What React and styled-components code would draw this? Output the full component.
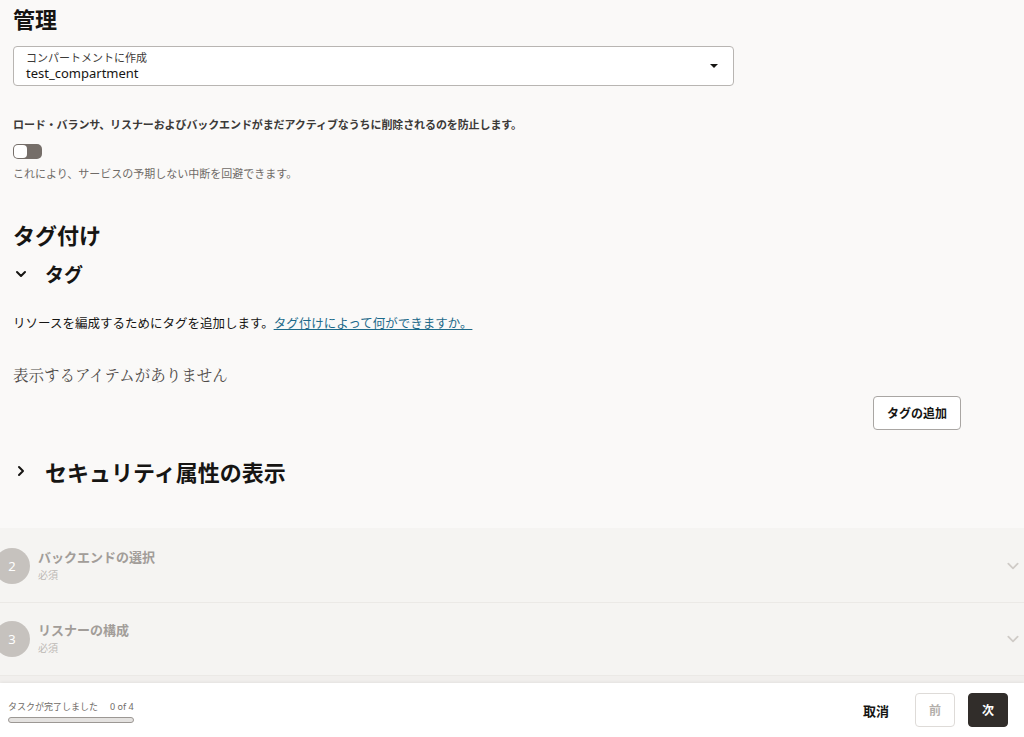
import React from "react";
import styled, { createGlobalStyle } from "styled-components";

const GlobalStyle = createGlobalStyle`
  html, body {
    margin: 0;
    padding: 0;
    background: #faf9f8;
  }
  body {
    font-family: "Noto Sans", "Noto Sans CJK JP", sans-serif;
    color: #161513;
  }
`;

const Page = styled.div`
  width: 1024px;
  height: 737px;
  display: flex;
  flex-direction: column;
  overflow: hidden;
  background: #faf9f8;
`;

const Content = styled.div`
  flex: 1;
  padding: 4px 13px 0 13px;
  display: flex;
  flex-direction: column;
`;

const Heading = styled.h2`
  margin: ${({ $top }) => $top || 0}px 0 0;
  font-size: 22px;
  line-height: 30px;
  font-weight: 700;
  color: #161513;
`;

const SelectBox = styled.div`
  margin-top: 12px;
  width: 721px;
  height: 40px;
  box-sizing: border-box;
  background: #fff;
  border: 1px solid #b8b5b2;
  border-radius: 4px;
  display: flex;
  align-items: center;
  justify-content: space-between;
  padding: 0 15px 0 12px;
`;

const SelectText = styled.div`
  display: flex;
  flex-direction: column;
`;

const SelectLabel = styled.span`
  font-size: 11px;
  line-height: 14px;
  color: #3c3a38;
`;

const SelectValue = styled.span`
  font-size: 13px;
  line-height: 16px;
  color: #161513;
`;

const Caret = styled.span`
  width: 0;
  height: 0;
  border-left: 4px solid transparent;
  border-right: 4px solid transparent;
  border-top: 4px solid #161513;
`;

const Notice = styled.div`
  margin-top: 31px;
  font-size: 11px;
  line-height: 16px;
  font-weight: 700;
  color: #3c3a38;
  letter-spacing: -0.1px;
`;

const Toggle = styled.div`
  margin-top: 11px;
  width: 29px;
  height: 15px;
  box-sizing: border-box;
  border-radius: 5px;
  background: #756e69;
  padding: 1px;
  display: flex;
`;

const Knob = styled.span`
  width: 13px;
  height: 13px;
  box-sizing: border-box;
  border-radius: 4px;
  background: #fff;
`;

const Helper = styled.div`
  margin-top: 7px;
  font-size: 11px;
  line-height: 16px;
  color: #6f6b67;
`;

const CollapseRow = styled.div`
  margin-top: ${({ $top }) => $top}px;
  display: flex;
  align-items: center;
  height: ${({ $h }) => $h}px;
`;

const ChevronBox = styled.span`
  width: 30px;
  display: flex;
  align-items: center;
  padding-left: 2px;
`;

const CollapseTitle = styled.span`
  font-size: ${({ $size }) => $size}px;
  font-weight: 700;
  color: #161513;
`;

const Description = styled.div`
  margin-top: 27px;
  font-size: 12.5px;
  line-height: 18px;
  color: #161513;
`;

const Link = styled.a`
  color: #1d6a8a;
  text-decoration: underline;
  padding-right: 4px;
`;

const Empty = styled.div`
  margin-top: 29px;
  font-family: "Noto Serif CJK JP", "Liberation Serif", serif;
  font-size: 15.5px;
  line-height: 24px;
  color: #4f4b48;
`;

const ButtonRow = styled.div`
  margin-top: 10px;
  display: flex;
  justify-content: flex-end;
  padding-right: 50px;
`;

const OutlineButton = styled.button`
  height: 34px;
  padding: 0 13px;
  background: #fff;
  border: 1px solid #a9a6a3;
  border-radius: 4px;
  font-family: inherit;
  font-size: 12px;
  font-weight: 700;
  color: #161513;
`;

const Steps = styled.div`
  background: #f5f4f2;
  padding-top: 2px;
  border-bottom: 7px solid #f1efed;
`;

const StepRow = styled.div`
  height: 72px;
  display: flex;
  align-items: center;
  border-bottom: 1px solid #ebe9e6;
  padding-right: 4px;
`;

const StepCircle = styled.span`
  width: 36px;
  height: 36px;
  margin-left: -6px;
  border-radius: 50%;
  background: #c6c2be;
  color: #fff;
  font-size: 13px;
  display: flex;
  align-items: center;
  justify-content: center;
  flex-shrink: 0;
`;

const StepText = styled.div`
  flex: 1;
  margin-left: 8px;
  display: flex;
  flex-direction: column;
  gap: 2px;
  margin-top: -2px;
`;

const StepTitle = styled.span`
  font-size: 13px;
  line-height: 18px;
  font-weight: 700;
  color: #a29d99;
`;

const StepSub = styled.span`
  font-size: 10px;
  line-height: 14px;
  color: #bdb9b5;
`;

const Footer = styled.div`
  height: 54px;
  background: #fff;
  box-shadow: 0 -1px 3px rgba(0, 0, 0, 0.06);
  display: flex;
  align-items: center;
  justify-content: space-between;
  padding: 0 16px 0 8px;
`;

const Progress = styled.div`
  display: flex;
  flex-direction: column;
  gap: 4px;
  margin-top: 4px;
`;

const ProgressLabel = styled.div`
  display: flex;
  gap: 12px;
  font-size: 9px;
  line-height: 12px;
  color: #6f6b67;
`;

const ProgressBar = styled.div`
  width: 126px;
  height: 6px;
  box-sizing: border-box;
  border: 1px solid #9c9894;
  border-radius: 3px;
  background: #e4e2e0;
`;

const Actions = styled.div`
  display: flex;
  align-items: center;
  gap: 13px;
`;

const TextButton = styled.button`
  background: none;
  border: none;
  padding: 0;
  font-family: inherit;
  font-size: 13px;
  font-weight: 700;
  color: #161513;
  margin-right: 13px;
`;

const NavButton = styled.button`
  width: 40px;
  height: 34px;
  border-radius: 4px;
  font-family: inherit;
  font-size: 12px;
  font-weight: 700;
  border: 1px solid ${({ $primary }) => ($primary ? "#312d2a" : "#dedbd8")};
  background: ${({ $primary }) => ($primary ? "#312d2a" : "#fff")};
  color: ${({ $primary }) => ($primary ? "#fff" : "#b3afab")};
`;

const Chevron = ({ dir, color = "#161513", size = 12, width = 2 }) => (
  <svg width={size} height={size} viewBox="0 0 12 12">
    <polyline
      points={dir === "down" ? "2,4 6,8 10,4" : "4,2 8,6 4,10"}
      fill="none"
      stroke={color}
      strokeWidth={width}
      strokeLinecap="round"
      strokeLinejoin="round"
    />
  </svg>
);

const steps = [
  { n: 2, title: "バックエンドの選択" },
  { n: 3, title: "リスナーの構成" },
];

export default function App() {
  return (
    <Page>
      <GlobalStyle />
      <Content>
        <Heading>管理</Heading>
        <SelectBox>
          <SelectText>
            <SelectLabel>コンパートメントに作成</SelectLabel>
            <SelectValue>test_compartment</SelectValue>
          </SelectText>
          <Caret />
        </SelectBox>
        <Notice>
          ロード・バランサ、リスナーおよびバックエンドがまだアクティブなうちに削除されるのを防止します。
        </Notice>
        <Toggle>
          <Knob />
        </Toggle>
        <Helper>これにより、サービスの予期しない中断を回避できます。</Helper>

        <Heading $top={38}>タグ付け</Heading>
        <CollapseRow $top={10} $h={28}>
          <ChevronBox>
            <Chevron dir="down" />
          </ChevronBox>
          <CollapseTitle $size={19}>タグ</CollapseTitle>
        </CollapseRow>
        <Description>
          リソースを編成するためにタグを追加します。
          <Link href="#">タグ付けによって何ができますか。</Link>
        </Description>
        <Empty>表示するアイテムがありません</Empty>
        <ButtonRow>
          <OutlineButton>タグの追加</OutlineButton>
        </ButtonRow>
        <CollapseRow $top={26} $h={30}>
          <ChevronBox>
            <Chevron dir="right" />
          </ChevronBox>
          <CollapseTitle $size={22}>セキュリティ属性の表示</CollapseTitle>
        </CollapseRow>
      </Content>

      <Steps>
        {steps.map((s) => (
          <StepRow key={s.n}>
            <StepCircle>{s.n}</StepCircle>
            <StepText>
              <StepTitle>{s.title}</StepTitle>
              <StepSub>必須</StepSub>
            </StepText>
            <Chevron dir="down" color="#cfcbc7" size={14} width={1.5} />
          </StepRow>
        ))}
      </Steps>

      <Footer>
        <Progress>
          <ProgressLabel>
            <span>タスクが完了しました</span>
            <span>0 of 4</span>
          </ProgressLabel>
          <ProgressBar />
        </Progress>
        <Actions>
          <TextButton>取消</TextButton>
          <NavButton>前</NavButton>
          <NavButton $primary>次</NavButton>
        </Actions>
      </Footer>
    </Page>
  );
}
